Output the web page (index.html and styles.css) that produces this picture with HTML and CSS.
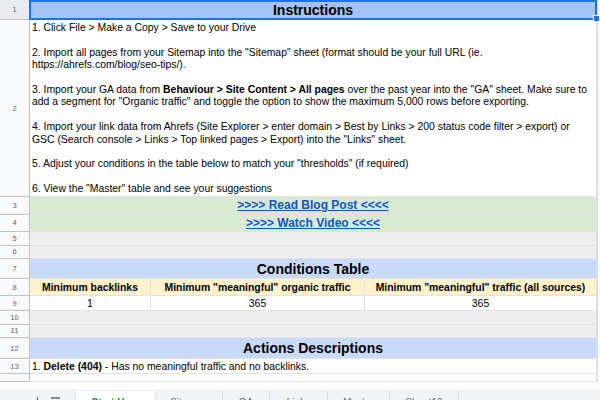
FILE: index.html
```html
<!DOCTYPE html>
<html lang="en">
<head>
    <meta charset="UTF-8">
    <title>Content Audit - Start Here</title>
    <link rel="stylesheet" href="styles.css">
</head>
<body>
    <div class="page">
        <div class="sheet">
            <div class="row r-title">
                <div class="rh rh-active">1</div>
                <div class="cell wide bg-title title sel">Instructions</div>
            </div>

            <div class="row r-notes">
                <div class="rh">2</div>
                <div class="cell wide notes">
                    <p>1. Click File &gt; Make a Copy &gt; Save to your Drive</p>
                    <p>2. Import all pages from your Sitemap into the "Sitemap" sheet (format should be your full URL (ie.<br>https://ahrefs.com/blog/seo-tips/).</p>
                    <p>3. Import your GA data from <b>Behaviour &gt; Site Content &gt; All pages</b> over the past year into the "GA" sheet. Make sure to<br>add a segment for "Organic traffic" and toggle the option to show the maximum 5,000 rows before exporting.</p>
                    <p>4. Import your link data from Ahrefs (Site Explorer &gt; enter domain &gt; Best by Links &gt; 200 status code filter &gt; export) or<br>GSC (Search console &gt; Links &gt; Top linked pages &gt; Export) into the "Links" sheet.</p>
                    <p>5. Adjust your conditions in the table below to match your "thresholds" (if required)</p>
                    <p>6. View the "Master" table and see your suggestions</p>
                </div>
            </div>

            <div class="row r-link">
                <div class="rh">3</div>
                <div class="cell wide bg-link center"><a href="#">&gt;&gt;&gt;&gt; Read Blog Post &lt;&lt;&lt;&lt;</a></div>
            </div>
            <div class="row r-link">
                <div class="rh">4</div>
                <div class="cell wide bg-link center"><a href="#">&gt;&gt;&gt;&gt; Watch Video &lt;&lt;&lt;&lt;</a></div>
            </div>

            <div class="row r-gap">
                <div class="rh">5</div>
                <div class="cell wide bg-gap"></div>
            </div>
            <div class="row r-gap">
                <div class="rh">6</div>
                <div class="cell wide bg-gap"></div>
            </div>

            <div class="row r-title">
                <div class="rh">7</div>
                <div class="cell wide bg-section title">Conditions Table</div>
            </div>

            <div class="row r-head">
                <div class="rh">8</div>
                <div class="cell bg-head center"><b>Minimum backlinks</b></div>
                <div class="cell bg-head center"><b>Minimum "meaningful" organic traffic</b></div>
                <div class="cell bg-head center"><b>Minimum "meaningful" traffic (all sources)</b></div>
            </div>
            <div class="row r-data">
                <div class="rh">9</div>
                <div class="cell center">1</div>
                <div class="cell center">365</div>
                <div class="cell center">365</div>
            </div>

            <div class="row r-gap">
                <div class="rh">10</div>
                <div class="cell wide bg-gap"></div>
            </div>
            <div class="row r-gap">
                <div class="rh">11</div>
                <div class="cell wide bg-gap"></div>
            </div>

            <div class="row r-section">
                <div class="rh">12</div>
                <div class="cell wide bg-section title">Actions Descriptions</div>
            </div>
            <div class="row r-data">
                <div class="rh">13</div>
                <div class="cell wide"><span>1. <b>Delete (404)</b> - Has no meaningful traffic and no backlinks.</span></div>
            </div>
            <div class="row r-tail">
                <div class="rh"></div>
                <div class="cell wide"></div>
            </div>
        </div>
        <div class="vscroll"></div>
    </div>

    <div class="hscroll"></div>

    <div class="tabs">
        <div class="tab-tools">
            <svg width="9" height="9" viewBox="0 0 9 9"><path d="M4.5 0v9M0 4.5h9" stroke="#5f6368" stroke-width="1.2"/></svg>
            <svg width="9" height="9" viewBox="0 0 9 9"><path d="M0 1h9M0 4.5h9M0 8h9" stroke="#5f6368" stroke-width="1.4"/></svg>
        </div>
        <div class="tab active w-start">Start Here</div>
        <div class="tab w-sitemap">Sitemap</div>
        <div class="tab w-ga">GA</div>
        <div class="tab w-links">Links</div>
        <div class="tab w-master">Master</div>
        <div class="tab w-sheet">Sheet13</div>
    </div>
</body>
</html>
```

FILE: styles.css
```css
* {
    margin: 0;
    padding: 0;
    box-sizing: border-box;
}

body {
    width: 600px;
    height: 400px;
    overflow: hidden;
    background: #fff;
    font-family: "Liberation Sans", Arial, sans-serif;
    font-size: 10.4px;
    color: #000;
}

.page {
    display: flex;
}

.sheet {
    width: 597px;
    display: flex;
    flex-direction: column;
}

.vscroll {
    flex: 1;
    background: #f8f9fa;
    border-left: 1px solid #dadce0;
}

.row {
    display: grid;
    grid-template-columns: 30px 121px 214px 232px;
}

/* row heights */
.r-title { height: 20px; }
.r-notes { height: 177px; }
.r-link { height: 17.5px; }
.r-gap { height: 13.5px; }
.r-head { height: 17px; }
.r-data { height: 15px; }
.r-section { height: 21px; }
.r-tail { height: 8px; }

.rh {
    background: #f8f9fa;
    border-right: 1px solid #c0c0c0;
    border-bottom: 1px solid #c0c0c0;
    color: #5f6368;
    font-size: 7.5px;
    display: flex;
    align-items: center;
    justify-content: center;
}

.rh-active {
    background: #e8eaed;
}

.cell {
    border-right: 1px solid #e2e2e3;
    border-bottom: 1px solid #e2e2e3;
    overflow: hidden;
    white-space: nowrap;
    display: flex;
    align-items: center;
    padding: 0 2px;
}

.wide {
    grid-column: span 3;
}

.center {
    justify-content: center;
}

.title {
    justify-content: center;
    font-weight: bold;
    font-size: 14px;
}

.bg-title { background: #a4c2f4; }
.bg-section { background: #c9daf8; }
.bg-link { background: #d9ead3; }
.bg-gap { background: #efefef; }
.bg-head { background: #fff2cc; }

.sel {
    position: relative;
    overflow: visible;
}

.sel::after {
    content: "";
    position: absolute;
    top: 0;
    left: -1px;
    right: -1px;
    bottom: -1px;
    border: 2px solid #1a73e8;
}

.sel::before {
    content: "";
    position: absolute;
    right: -4px;
    bottom: -3px;
    width: 5px;
    height: 5px;
    background: #1a73e8;
    border: 1px solid #fff;
    z-index: 1;
}

.notes {
    display: block;
    padding: 2px 2px 0;
    line-height: 12.4px;
}

.notes p {
    margin-bottom: 12.4px;
}

.bg-link a {
    color: #1155cc;
    font-weight: bold;
    font-size: 12px;
}

.hscroll {
    height: 8px;
    background: #fff;
}

.tabs {
    height: 10px;
    display: flex;
    background: #f1f3f4;
    border-top: 1px solid #e8eaed;
    font-size: 10px;
    color: #5f6368;
    overflow: hidden;
}

.tab-tools {
    width: 76px;
    display: flex;
    gap: 9px;
    padding: 6px 0 0 33px;
}

.tab {
    padding-top: 6px;
    text-align: center;
    border-right: 1px solid #dadce0;
    white-space: nowrap;
}

.tab.active {
    background: #fff;
    color: #188038;
    font-weight: bold;
    border-right: none;
    box-shadow: 0 0 2px rgba(0,0,0,0.2);
}

.w-start { width: 79px; }
.w-sitemap { width: 68px; }
.w-ga { width: 47px; }
.w-links { width: 58px; }
.w-master { width: 62px; }
.w-sheet { width: 69px; }
```
